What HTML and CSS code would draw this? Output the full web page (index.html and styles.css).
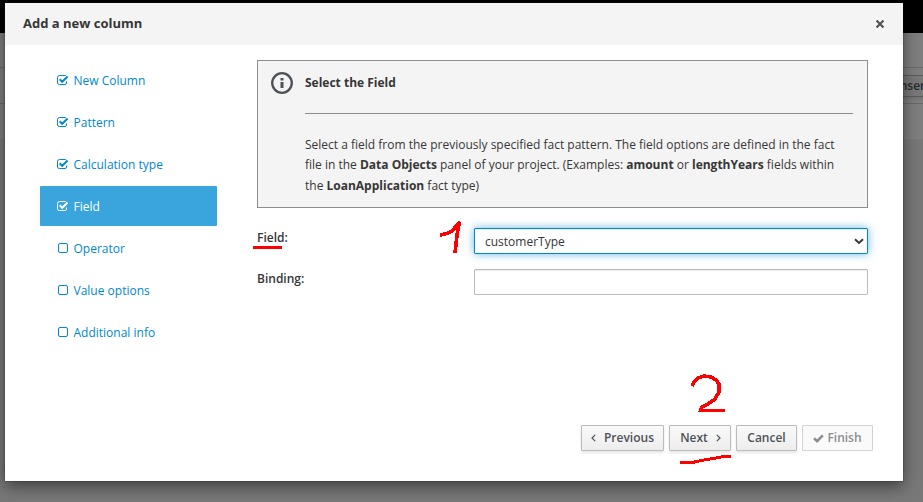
FILE: index.html
```html
<!DOCTYPE html>
<html lang="en">
<head>
<meta charset="utf-8">
<title>Add a new column</title>
<link rel="stylesheet" href="styles.css">
</head>
<body>
<svg class="defs" aria-hidden="true">
  <symbol id="checked" viewBox="0 0 12 11">
    <path d="M9.2 1.1Q8.8 .5 8.2 .5H2.5Q.5 .5 .5 2.500V8Q.5 9.500 2.500 9.500H8Q9.500 9.500 9.500 8V6.500" fill="none" stroke="currentColor" stroke-width="1"/>
    <path d="M2.700 4.300L5.200 6.800L10.600 1.500" fill="none" stroke="currentColor" stroke-width="2"/>
  </symbol>
  <symbol id="unchecked" viewBox="0 0 12 11">
    <rect x="1.5" y=".5" width="9" height="9" rx="1.5" fill="none" stroke="currentColor" stroke-width="1"/>
  </symbol>
</svg>
<div class="page">
  <div class="topbar"></div>
  <div class="band"></div>
  <div class="toolbar"><span class="insert">Insert</span></div>
  <div class="band last"></div>
</div>
<section class="modal">
  <header class="modal-header"><h1>Add a new column</h1>
    <svg class="close" viewBox="0 0 8 8"><path d="M.5 .5L7.500 7.500M7.500 .5L.5 7.500" stroke="currentColor" stroke-width="2.200"/></svg>
  </header>
  <div class="modal-body">
    <nav class="steps">
      <a><svg><use href="#checked"/></svg>New Column</a>
      <a><svg><use href="#checked"/></svg>Pattern</a>
      <a><svg><use href="#checked"/></svg>Calculation type</a>
      <a class="active"><svg><use href="#checked"/></svg>Field</a>
      <a><svg><use href="#unchecked"/></svg>Operator</a>
      <a><svg><use href="#unchecked"/></svg>Value options</a>
      <a><svg><use href="#unchecked"/></svg>Additional info</a>
    </nav>
    <main>
      <div class="info">
        <svg class="info-icon" viewBox="0 0 22 22"><circle cx="11" cy="11" r="9.8" fill="none" stroke="currentColor" stroke-width="2.3"/><path d="M9.5 6h3v2.6h-3zM9.5 10h3v6h-3z" fill="currentColor"/></svg>
        <div class="info-text">
          <h2>Select the Field</h2>
          <p>Select a field from the previously specified fact pattern. The field options are defined in the fact<br>file in the <b>Data Objects</b> panel of your project. (Examples: <b>amount</b> or <b>lengthYears</b> fields within<br>the <b>LoanApplication</b> fact type)</p>
        </div>
      </div>
      <div class="row"><label>Field:</label><div class="control focused"><span>customerType</span><svg class="arrow" viewBox="0 0 10 7"><path d="M1 1.3L5 5L9 1.3" fill="none" stroke="currentColor" stroke-width="2"/></svg></div></div>
      <div class="row"><label>Binding:</label><div class="control"></div></div>
    </main>
  </div>
  <footer>
    <button class="previous"><svg class="angle" viewBox="0 0 5 8"><path d="M4.2 .8L1 4L4.2 7.2"/></svg>Previous</button>
    <button class="next">Next<svg class="angle" viewBox="0 0 5 8"><path d="M.8 .8L4 4L.8 7.2"/></svg></button>
    <button class="cancel">Cancel</button>
    <button class="finish" disabled><svg class="tick" viewBox="0 0 11 9"><path d="M1.1 4.3L4.1 7.2L9.8 1.4" fill="none" stroke="currentColor" stroke-width="2.6"/></svg>Finish</button>
  </footer>
</section>
<svg class="marks" viewBox="0 0 923 502" shape-rendering="crispEdges">
  <path class="flat" d="M253 247.5H282"/>
  <path d="M440 235L447 233.500L452 231L459.500 222L457 235L455 253"/>
  <path d="M692 386L694 382L698 378L704 376L711 377L716 380L719 384V392L715 399L708 404L702 407L700.500 410.500H725"/>
  <path class="flat" d="M680 462.500H692L704 460L716 458L724 456.500H731"/>
</svg>
</body>
</html>
```
FILE: styles.css
```css
* { box-sizing: border-box; }
body { margin: 0; width: 923px; height: 502px; overflow: hidden; position: relative; background: #787878; color: #363636; font: 12px/20px "Open Sans", "Noto Sans", sans-serif; }
.defs { display: none; }
.topbar { height: 33px; background: #000; }
.band { height: 35px; background: #7f7f7f; border-bottom: 1px solid #6a6a6a; }
.toolbar { height: 36px; display: flex; justify-content: flex-end; align-items: flex-start; padding-top: 7px; background: #7f7f7f; border-bottom: 1px solid #6a6a6a; }
.insert { height: 22px; width: 52px; margin-right: -14px; padding: 0 10px; border: 1px solid #5d5d5d; background: #797979; color: #272a2d; font-weight: 600; font-size: 12px; box-shadow: 0 2px 3px rgba(3,3,3,.1); }
.last { border: 0; }
.modal { position: absolute; left: 5px; top: 3px; width: 898px; height: 478px; display: flex; flex-direction: column; background: #fff; box-shadow: 0 5px 15px rgba(0,0,0,.5), 0 0 1px #222; }
.modal-header { height: 42px; display: flex; align-items: center; justify-content: space-between; padding: 0 19px 0 18px; background: #f4f4f4; }
h1 { margin: 0; padding-bottom: 2px; font-size: 13px; line-height: 20px; font-weight: 700; }
.close { width: 8px; height: 8px; color: #555; }
.modal-body { display: flex; gap: 40px; flex: 1; padding: 15px 35px 0; }
.steps { display: flex; flex-direction: column; gap: 2px; width: 177px; }
.steps a { height: 40px; display: flex; align-items: center; padding: 2px 0 0 17px; color: #0088ce; }
.steps svg { width: 12px; height: 11px; margin: -1px 4.500px 0 0; }
.steps .active { background: #39a5dc; color: #fff; border-radius: 1px; }
main { width: 611px; }
.info { height: 148px; display: flex; align-items: flex-start; padding: 10px 14px 0 13px; margin-bottom: 20px; border: 1px solid #8b8d8f; background: #f4f4f4; }
.info-icon { width: 22px; height: 22px; margin-top: 1px; margin-right: 12px; color: #4d5258; }
.info-text { flex: 1; }
h2 { margin: 0; height: 43px; font-size: 12px; line-height: 23px; font-weight: 700; border-bottom: 1px solid #8b8d8f; }
p { margin: 20.700px 0 0; line-height: 20.500px; white-space: nowrap; }
.row { display: flex; justify-content: space-between; height: 41px; }
label { font-weight: 600; line-height: 19px; }
.control { display: flex; align-items: center; justify-content: space-between; width: 394px; height: 26px; padding: 0 4px 0 10px; border: 1px solid #bbb; border-radius: 1px; box-shadow: inset 0 1px 1px rgba(3,3,3,.075); }
.control span { padding-top: 2px; }
.focused { border-color: #0088ce; box-shadow: inset 0 1px 1px rgba(3,3,3,.075), 0 0 8px rgba(0,136,206,.6); }
.arrow { width: 10px; height: 7px; margin-right: -1px; }
footer { display: flex; justify-content: flex-end; gap: 5px; padding: 0 30px 30px; }
button { display: flex; align-items: center; justify-content: center; height: 26px; padding: 0; border: 1px solid #bbb; border-radius: 1px; background: linear-gradient(#fafafa, #ededed); color: #4d5258; font: 600 12px/20px "Open Sans", "Noto Sans", sans-serif; box-shadow: 0 2px 3px rgba(3,3,3,.1); }
button svg { flex: none; }
.previous { width: 83px; gap: 8px; }
.next { width: 62px; gap: 8px; padding-left: 1px; }
.cancel { width: 61px; }
.finish { width: 71px; gap: 3px; background: #fafafa; border-color: #d1d1d1; color: #8b8d8f; box-shadow: none; }
.angle { width: 5px; height: 8px; fill: none; stroke: currentColor; stroke-width: 1.200; }
.tick { width: 11px; height: 9px; }
.marks { position: absolute; left: 0; top: 0; width: 923px; height: 502px; pointer-events: none; fill: none; stroke: #f00; stroke-width: 3.600; }
.flat { stroke-width: 3; }
```
